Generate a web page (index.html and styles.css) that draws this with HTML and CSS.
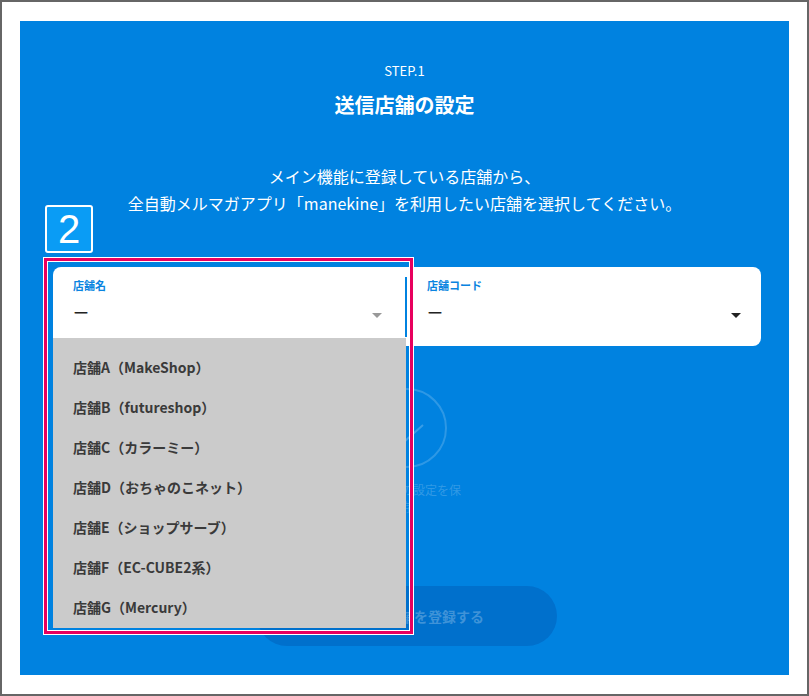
FILE: index.html
```html
<!DOCTYPE html>
<html lang="ja">
<head>
  <meta charset="UTF-8" />
  <title>STEP.1 送信店舗の設定</title>
  <link rel="stylesheet" href="styles.css">
</head>
<body>
  <div class="frame">
    <section class="panel">
      <p class="step">STEP.1</p>
      <h1 class="title">送信店舗の設定</h1>
      <p class="lead">メイン機能に登録している店舗から、<br>全自動メルマガアプリ「manekine」を利用したい店舗を選択してください。</p>

      <div class="body">
        <div class="selects">
          <div class="badge">2</div>
          <div class="mark"></div>

          <div class="select select-left">
            <div class="select-body">
              <div class="select-label">店舗名</div>
              <div class="select-value">
                <span>ー</span>
                <span class="caret caret-gray"></span>
              </div>
            </div>
            <ul class="dropdown">
              <li>店舗A（MakeShop）</li>
              <li>店舗B（futureshop）</li>
              <li>店舗C（カラーミー）</li>
              <li>店舗D（おちゃのこネット）</li>
              <li>店舗E（ショップサーブ）</li>
              <li>店舗F（EC-CUBE2系）</li>
              <li>店舗G（Mercury）</li>
            </ul>
          </div>

          <div class="select select-right">
            <div class="select-label">店舗コード</div>
            <div class="select-value">
              <span>ー</span>
              <span class="caret"></span>
            </div>
          </div>
        </div>

        <div class="save">
          <svg class="save-icon" width="82" height="82" viewBox="0 0 82 82">
            <circle cx="41" cy="41" r="39" fill="none" stroke="rgba(255,255,255,0.18)" stroke-width="2"/>
            <polyline points="24,37 39,54 57,38" fill="none" stroke="rgba(255,255,255,0.22)" stroke-width="2"/>
          </svg>
          <p class="save-text">送信店舗の設定を保存</p>
        </div>

        <button class="submit">選択した店舗を登録する</button>
      </div>
    </section>
  </div>
</body>
</html>
```

FILE: styles.css
```css
html, body {
  margin: 0;
  padding: 0;
  background: #fff;
}

body, p, h1, ul, li, button {
  font-family: "Noto Sans CJK JP", "Noto Sans", sans-serif;
}

.frame {
  box-sizing: border-box;
  width: 809px;
  height: 696px;
  border: 2px solid #666;
  padding: 19px 18px;
}

.panel {
  height: 654px;
  background: #0082e0;
  color: #fff;
  text-align: center;
  padding-top: 40px;
  box-sizing: border-box;
}

.step {
  margin: 0;
  font-size: 13px;
  line-height: 20px;
}

.title {
  margin: 11px 0 0;
  font-size: 20px;
  line-height: 26px;
  font-weight: 700;
}

.lead {
  margin: 45px 0 0;
  font-size: 16px;
  line-height: 27px;
}

.body {
  margin: 0 28px 0 33px;
}

/* selects */
.selects {
  position: relative;
  display: flex;
  margin-top: 50px;
  height: 79px;
  text-align: left;
}

.select {
  background: #fff;
  height: 79px;
  box-sizing: border-box;
}

.select-left {
  position: relative;
  width: 357px;
  border-radius: 8px 0 0 8px;
  padding: 10px 3px 9px 0;
  z-index: 2;
}

.select-body {
  height: 60px;
  border-right: 2px solid #0082e0;
  padding: 0 23px 0 20px;
}

.select-right {
  flex: 1;
  border-radius: 0 8px 8px 0;
  padding: 10px 20px 0 17px;
}

.select-label {
  font-size: 11px;
  line-height: 16px;
  font-weight: 700;
  color: #0a84e0;
}

.select-value {
  display: flex;
  justify-content: space-between;
  align-items: center;
  margin-top: 7px;
  font-size: 16px;
  line-height: 24px;
  color: #222;
}

.caret {
  width: 0;
  height: 0;
  border-left: 5px solid transparent;
  border-right: 5px solid transparent;
  border-top: 5px solid #222;
  margin-top: 6px;
}

.caret-gray {
  border-left-width: 5px;
  border-right-width: 5px;
  border-top-color: #999;
}

.dropdown {
  position: absolute;
  top: 71px;
  left: 0;
  width: 353px;
  margin: 0;
  padding: 9px 0 1px;
  list-style: none;
  background: #cbcbcb;
}

.dropdown li {
  height: 40px;
  line-height: 40px;
  padding-left: 20px;
  font-size: 14px;
  font-weight: 700;
  color: #3a3a3a;
}

/* annotation */
.badge {
  position: absolute;
  left: -8px;
  top: -62px;
  width: 48px;
  height: 48px;
  box-sizing: border-box;
  border: 2px solid #fff;
  border-radius: 3px;
  background: #0a9cf5;
  color: #fff;
  font-family: "Liberation Sans", Arial, sans-serif;
  font-size: 40px;
  line-height: 44px;
  text-align: center;
}

.mark {
  position: absolute;
  left: -9px;
  top: -9px;
  width: 369px;
  height: 376px;
  box-sizing: border-box;
  border: 3px solid #e8005e;
  box-shadow: 0 0 0 1px #fff, inset 0 0 0 1px #fff;
  z-index: 3;
  pointer-events: none;
}

/* save */
.save {
  margin-top: 41px;
}

.save-icon {
  display: block;
  margin: 0 auto;
}

.save-text {
  width: 110px;
  margin: 12px auto 0;
  font-size: 12px;
  line-height: 17px;
  color: rgba(255, 255, 255, 0.2);
}

.submit {
  display: block;
  width: 300px;
  height: 60px;
  margin: 71px auto 0;
  border: none;
  border-radius: 30px;
  background: #0070cc;
  color: rgba(255, 255, 255, 0.25);
  font-size: 14px;
  font-weight: 700;
}
```
